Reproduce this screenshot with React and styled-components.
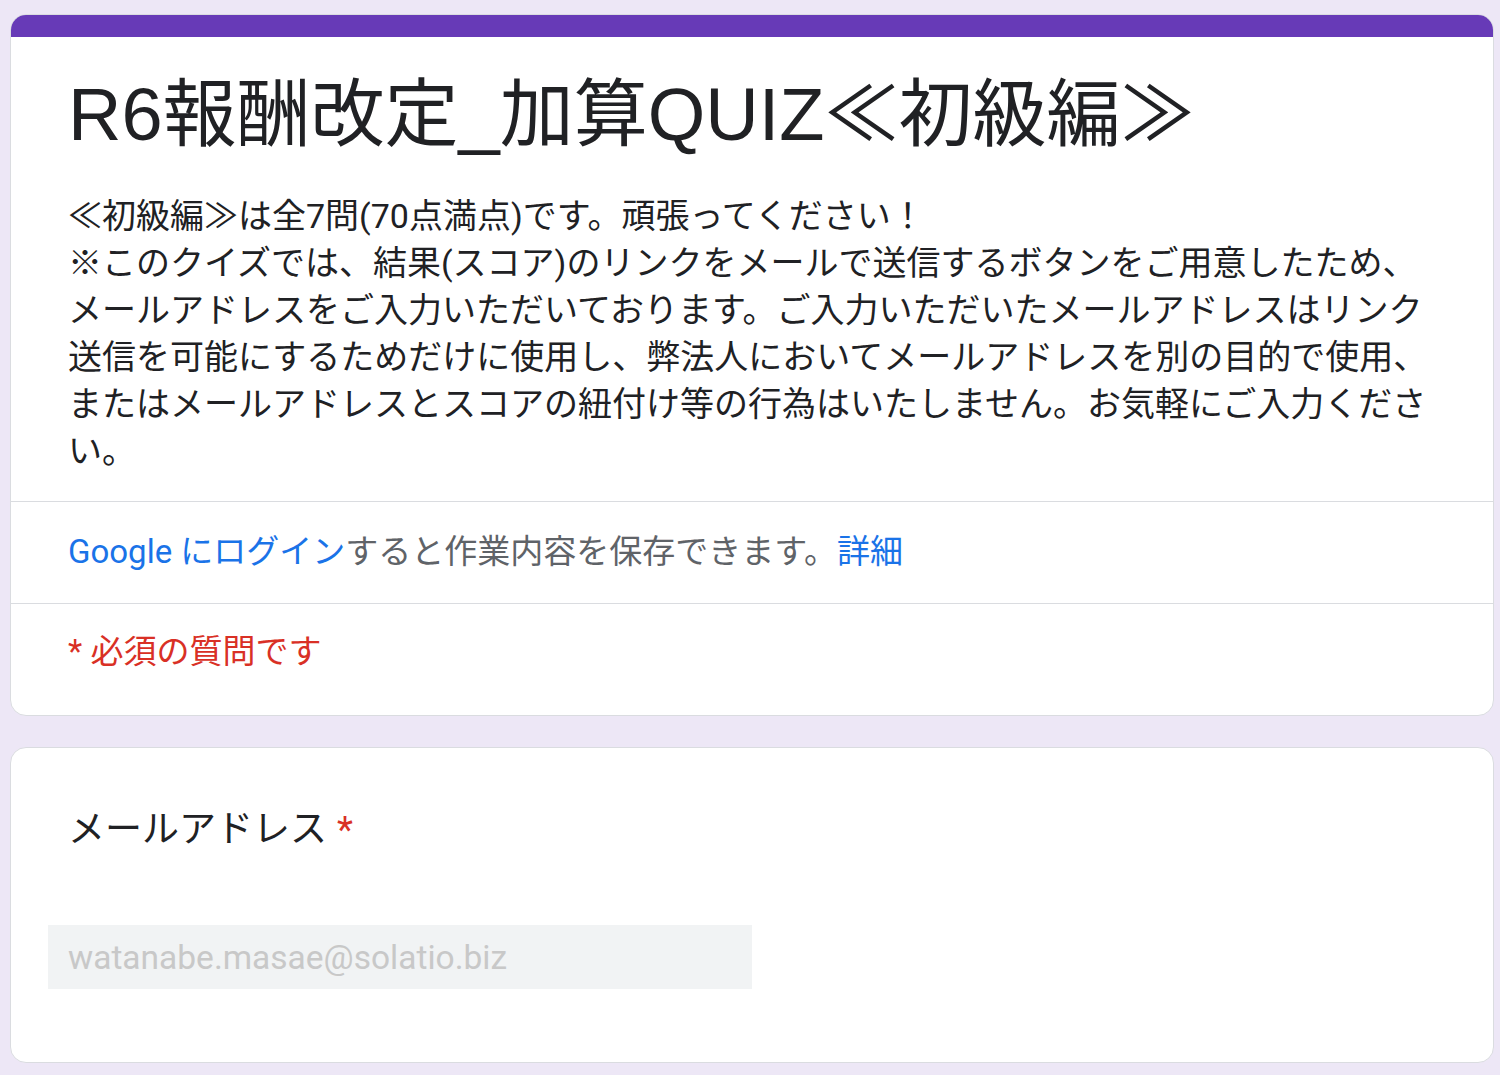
import React from "react";
import styled, { createGlobalStyle } from "styled-components";

const Global = createGlobalStyle`
  html, body { margin: 0; padding: 0; background: #ede7f6; }
  body { font-family: Roboto, "Noto Sans CJK JP", sans-serif; }
`;

const Page = styled.div`
  display: flex;
  flex-direction: column;
  gap: 31px;
  padding: 14px 6px 10px 10px;
  min-height: 1075px;
  box-sizing: border-box;
`;

const Card = styled.section`
  background: #fff;
  border: 1px solid #dadce0;
  border-radius: 16px;
  overflow: hidden;
  box-sizing: border-box;
`;

const Strip = styled.div`
  height: 23px;
  margin: -1px -1px 0;
  background: #673ab7;
`;

const Section = styled.div`
  padding: ${(p) => p.$pad};
  & + & { border-top: 1px solid #dadce0; }
`;

const Title = styled.h1`
  margin: 0;
  font-family: "Liberation Sans", "Noto Sans CJK JP", sans-serif;
  font-weight: 400;
  font-size: 74px;
  line-height: 98px;
  color: #202124;
`;

const Description = styled.p`
  margin: 29px 0 0;
  font-family: Roboto, "Noto Sans CJK JP", sans-serif;
  font-size: 34px;
  line-height: 47px;
  color: #202124;
  white-space: pre-wrap;
`;

const Note = styled.div`
  font-family: Roboto, "Noto Sans CJK JP", sans-serif;
  font-size: 33px;
  line-height: 48px;
  color: ${(p) => p.$color || "#5f6368"};
`;

const Link = styled.span`
  color: #1a73e8;
`;

const Question = styled.div`
  font-family: Roboto, "Noto Sans CJK JP", sans-serif;
  font-size: 37px;
  line-height: 55px;
  color: #202124;
`;

const Star = styled.span`
  color: #d93025;
  margin-left: 10px;
`;

const Field = styled.input`
  display: block;
  box-sizing: border-box;
  margin: 68px 0 0 -20px;
  width: 704px;
  height: 64px;
  padding: 0 0 0 20px;
  border: none;
  outline: none;
  background: #f1f3f4;
  font-family: Roboto, sans-serif;
  font-size: 33.5px;
  color: #c8c8c8;
`;

const desc =
  "≪初級編≫は全7問(70点満点)です。頑張ってください！\n※このクイズでは、結果(スコア)のリンクをメールで送信するボタンをご用意したため、メールアドレスをご入力いただいております。ご入力いただいたメールアドレスはリンク送信を可能にするためだけに使用し、弊法人においてメールアドレスを別の目的で使用、またはメールアドレスとスコアの紐付け等の行為はいたしません。お気軽にご入力ください。";

export default function App() {
  return (
    <>
      <Global />
      <Page>
        <Card>
          <Strip />
          <Section $pad="29px 57px 26px">
            <Title>R6報酬改定_加算QUIZ≪初級編≫</Title>
            <Description>{desc}</Description>
          </Section>
          <Section $pad="26px 57px 27px">
            <Note>
              <Link>Google にログイン</Link>すると作業内容を保存できます。<Link>詳細</Link>
            </Note>
          </Section>
          <Section $pad="24px 57px 39px">
            <Note $color="#d93025">* 必須の質問です</Note>
          </Section>
        </Card>
        <Card>
          <Section $pad="54px 57px 73px">
            <Question>
              メールアドレス<Star>*</Star>
            </Question>
            <Field readOnly defaultValue="watanabe.masae@solatio.biz" />
          </Section>
        </Card>
      </Page>
    </>
  );
}
